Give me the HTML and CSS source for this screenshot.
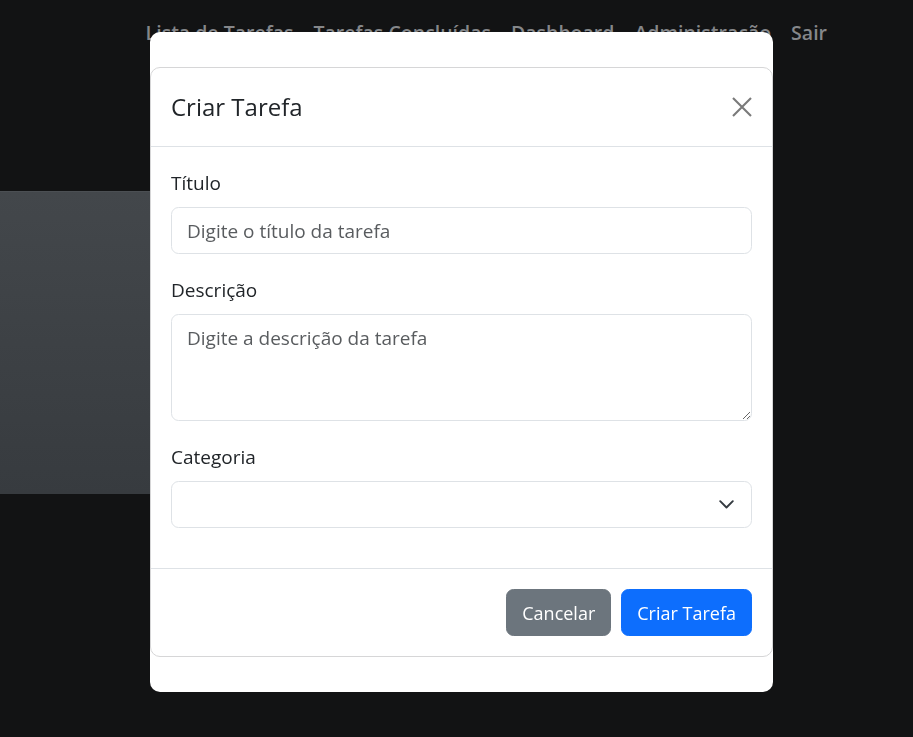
FILE: index.html
```html
<!DOCTYPE html>
<html lang="pt-BR">
<head>
<meta charset="utf-8">
<title>Criar Tarefa</title>
<link rel="stylesheet" href="styles.css">
</head>
<body>
<header class="navbar">
  <nav class="nav-links">
    <a class="nav-link" href="#">Lista de Tarefas</a>
    <a class="nav-link" href="#">Tarefas Concluídas</a>
    <a class="nav-link" href="#">Dashboard</a>
    <a class="nav-link" href="#">Administração</a>
    <a class="nav-link" href="#">Sair</a>
  </nav>
</header>
<main class="page">
  <section class="hero"></section>
</main>

<div class="modal">
  <div class="modal-dialog">
    <div class="modal-content">
      <div class="modal-header">
        <h5 class="modal-title">Criar Tarefa</h5>
        <button class="btn-close" type="button" aria-label="Fechar">
          <svg width="20" height="20" viewBox="0 0 20 20" aria-hidden="true">
            <path d="M1 1 L19 19 M19 1 L1 19" stroke="#7a7a7a" stroke-width="2.1" fill="none"/>
          </svg>
        </button>
      </div>
      <div class="modal-body">
        <div class="field">
          <label class="form-label" for="titulo">Título</label>
          <input class="form-control" id="titulo" type="text" placeholder="Digite o título da tarefa">
        </div>
        <div class="field">
          <label class="form-label" for="descricao">Descrição</label>
          <textarea class="form-control textarea" id="descricao" rows="3" placeholder="Digite a descrição da tarefa"></textarea>
        </div>
        <div class="field">
          <label class="form-label" for="categoria">Categoria</label>
          <div class="select-wrap">
            <select class="form-control form-select" id="categoria">
              <option value=""></option>
            </select>
            <svg class="select-arrow" width="15" height="9" viewBox="0 0 15 9" aria-hidden="true">
              <path d="M1.2 1.2 L7.5 7.5 L13.8 1.2" stroke="#343a40" stroke-width="1.9" fill="none" stroke-linecap="round" stroke-linejoin="round"/>
            </svg>
          </div>
        </div>
      </div>
      <div class="modal-footer">
        <button class="btn btn-secondary" type="button">Cancelar</button>
        <button class="btn btn-primary" type="button">Criar Tarefa</button>
      </div>
    </div>
  </div>
</div>
</body>
</html>
```

FILE: styles.css
```css
* { box-sizing: border-box; }

html, body {
  margin: 0;
  padding: 0;
}

body {
  background: #121314;
  font-family: "Open Sans", "Noto Sans", "Liberation Sans", sans-serif;
  font-size: 19px;
  line-height: 30px;
  color: #212529;
  width: 913px;
  height: 737px;
  overflow: hidden;
}

.navbar {
  height: 60px;
  padding-top: 18px;
}

.nav-links {
  display: flex;
  justify-content: flex-end;
  gap: 20px;
  padding-right: 86px;
}

.nav-link {
  color: #85878a;
  font-weight: 600;
  font-size: 19.5px;
  text-decoration: none;
  line-height: 30px;
}

.page {
  padding-top: 131px;
}

.hero {
  width: 420px;
  height: 303px;
  background: linear-gradient(#43474b, #373b3f);
  border-top: 1px solid #4b4f53;
}

.modal {
  position: fixed;
  top: 32px;
  left: 150px;
  width: 623px;
}

.modal-dialog {
  background: #fff;
  border-radius: 10px;
  padding: 35px 0;
}

.modal-content {
  border: 1px solid #d6d6d7;
  border-radius: 10px;
  background: #fff;
}

.modal-header {
  display: flex;
  align-items: center;
  justify-content: space-between;
  padding: 20px;
  border-bottom: 1px solid #dee2e6;
}

.modal-title {
  margin: 0;
  font-size: 24px;
  font-weight: 500;
  line-height: 38px;
}

.btn-close {
  border: 0;
  background: transparent;
  padding: 0;
  width: 20px;
  height: 20px;
  display: flex;
  cursor: pointer;
}

.modal-body {
  padding: 20px;
}

.field {
  margin-bottom: 20px;
}

.form-label {
  display: block;
  margin-bottom: 10px;
  padding-top: 3px;
  line-height: 27px;
}

.form-control {
  display: block;
  width: 100%;
  height: 47px;
  padding: 7.5px 15px;
  font: inherit;
  line-height: 30px;
  color: #212529;
  background: #fff;
  border: 1px solid #dee2e6;
  border-radius: 7.5px;
  outline: none;
}

.form-control::placeholder {
  color: #595c5f;
  opacity: 1;
}

.textarea {
  height: 107px;
  resize: vertical;
}

.select-wrap {
  position: relative;
}

.form-select {
  appearance: none;
  -webkit-appearance: none;
}

.select-arrow {
  position: absolute;
  right: 18px;
  top: 19px;
  pointer-events: none;
}

.modal-footer {
  display: flex;
  justify-content: flex-end;
  gap: 10px;
  padding: 20px;
  border-top: 1px solid #dee2e6;
}

.btn {
  height: 47px;
  padding: 7.5px 15px;
  font-family: inherit;
  font-size: 18px;
  line-height: 30px;
  color: #fff;
  border: 1px solid transparent;
  border-radius: 7.5px;
  cursor: pointer;
}

.btn-secondary {
  background: #6c757d;
  border-color: #6c757d;
}

.btn-primary {
  background: #0d6efd;
  border-color: #0d6efd;
}
```
